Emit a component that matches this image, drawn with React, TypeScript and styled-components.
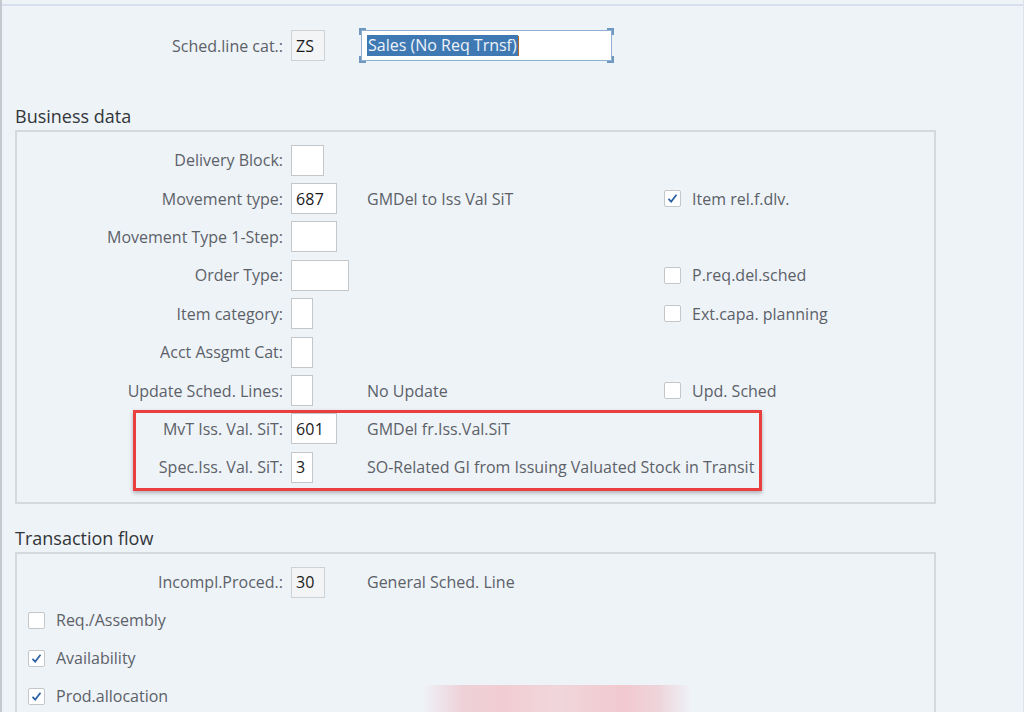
import React from "react";
import styled, { createGlobalStyle } from "styled-components";

const Global = createGlobalStyle`
  html, body { margin: 0; padding: 0; background: #eef3f8; }
  body { font-family: "Open Sans", "Liberation Sans", Arial, sans-serif; }
  * { box-sizing: border-box; }
`;

const FS = "16px";

const Screen = styled.div`
  position: relative;
  width: 1024px;
  height: 712px;
  overflow: hidden;
  background: #eef3f8;
  border-left: 2px solid #c4c9cf;
  border-right: 1px solid #dde3ea;
`;

const TopRule = styled.div`
  height: 2px;
  margin-top: 4px;
  background: #d6e0ec;
`;

const Content = styled.div`
  padding-left: 13px;
`;

const HeaderRow = styled.div`
  display: grid;
  grid-template-columns: 276px 70px 251px;
  align-items: center;
  height: 31px;
  margin-top: 24px;
`;

const Label = styled.div`
  font-size: ${FS};
  color: #5c6168;
  text-align: right;
  padding-right: 8px;
  white-space: nowrap;
`;

const Field = styled.div<{ $w: number; $ro?: boolean }>`
  width: ${(p) => p.$w}px;
  height: 31px;
  background: ${(p) => (p.$ro ? "#f3f4f5" : "#ffffff")};
  border: 1px solid ${(p) => (p.$ro ? "#cfd2d5" : "#c4c7ca")};
  font-size: ${FS};
  color: #1a1a1a;
  display: flex;
  align-items: center;
  padding-left: 4px;
  letter-spacing: 0.2px;
`;

const SelectedField = styled.div`
  position: relative;
  width: 251px;
  height: 31px;
  background: #ffffff;
  border: 1px solid #8fb0d0;
  display: flex;
  align-items: center;
  padding-left: 5px;
`;

const Corner = styled.span<{ $v: "top" | "bottom"; $h: "left" | "right" }>`
  position: absolute;
  width: 7px;
  height: 7px;
  ${(p) => p.$v}: -3px;
  ${(p) => p.$h}: -3px;
  border-${(p) => p.$v}: 2px solid #6f98c0;
  border-${(p) => p.$h}: 2px solid #6f98c0;
`;

const Highlight = styled.span`
  background: #3f79b3;
  color: #eef3f9;
  font-size: ${FS};
  line-height: 21px;
  padding: 0 1px;
`;

const Caret = styled.span`
  display: inline-block;
  width: 1px;
  height: 20px;
  background: #b06a2a;
`;

const SectionTitle = styled.div<{ $mt: number }>`
  margin-top: ${(p) => p.$mt}px;
  font-size: 18px;
  line-height: 20px;
  height: 20px;
  color: #32363a;
`;

const GroupBox = styled.div<{ $h?: number }>`
  position: relative;
  margin-top: 4px;
  width: 921px;
  ${(p) => (p.$h ? `height: ${p.$h}px;` : "")}
  border: 2px solid #d5d9de;
  padding-top: 9px;
`;

const FormGrid = styled.div<{ $rows: number; $rh: number }>`
  display: grid;
  grid-template-columns: 274px 76px 297px 1fr;
  grid-template-rows: repeat(${(p) => p.$rows}, ${(p) => p.$rh}px);
  align-items: center;
`;

const Desc = styled.div`
  font-size: ${FS};
  color: #5c6168;
  white-space: nowrap;
`;

const CheckRow = styled.label`
  display: flex;
  align-items: center;
  gap: 11px;
  font-size: ${FS};
  color: #5c6168;
  white-space: nowrap;
`;

const LeftCheckRow = styled(CheckRow)`
  grid-column: 1 / -1;
  padding-left: 11px;
`;

const Box = styled.span`
  width: 17px;
  height: 17px;
  background: #fff;
  border: 1px solid #c4c7ca;
  border-radius: 2px;
  display: flex;
  align-items: center;
  justify-content: center;
  flex: none;
`;

const Empty = styled.div``;

const RedFrame = styled.div`
  position: absolute;
  left: 116px;
  top: 278px;
  width: 629px;
  height: 81px;
  border: 3px solid #e9403f;
  box-shadow: 0 2px 4px rgba(0, 0, 0, 0.28);
  pointer-events: none;
`;

const Smudge = styled.div`
  position: absolute;
  left: 420px;
  top: 685px;
  width: 270px;
  height: 30px;
  background: linear-gradient(
    to right,
    rgba(238, 243, 248, 0) 0%,
    rgba(238, 200, 208, 0.8) 15%,
    #f1cdd3 30%,
    #f0d6db 50%,
    #f1c9cf 75%,
    rgba(238, 200, 208, 0.7) 88%,
    rgba(238, 243, 248, 0) 100%
  );
  pointer-events: none;
`;

const Tick = () => (
  <svg width="13" height="13" viewBox="0 0 13 13">
    <path d="M2.5 6.8 L5.2 9.6 L10.5 2.8" fill="none" stroke="#2a62a5" strokeWidth="1.7" />
  </svg>
);

const Check = ({ checked }: { checked?: boolean }) => <Box>{checked ? <Tick /> : null}</Box>;

type Row = {
  label: string;
  w: number;
  value?: string;
  desc?: string;
  check?: { text: string; checked?: boolean };
};

const rows: Row[] = [
  { label: "Delivery Block:", w: 33 },
  { label: "Movement type:", w: 46, value: "687", desc: "GMDel to Iss Val SiT", check: { text: "Item rel.f.dlv.", checked: true } },
  { label: "Movement Type 1-Step:", w: 46 },
  { label: "Order Type:", w: 58, check: { text: "P.req.del.sched" } },
  { label: "Item category:", w: 22, check: { text: "Ext.capa. planning" } },
  { label: "Acct Assgmt Cat:", w: 22 },
  { label: "Update Sched. Lines:", w: 22, desc: "No Update", check: { text: "Upd. Sched" } },
  { label: "MvT Iss. Val. SiT:", w: 46, value: "601", desc: "GMDel fr.Iss.Val.SiT" },
  { label: "Spec.Iss. Val. SiT:", w: 22, value: "3", desc: "SO-Related GI from Issuing Valuated Stock in Transit" },
];

export default function App() {
  return (
    <Screen>
      <Global />
      <TopRule />
      <Content>
        <HeaderRow>
          <Label>Sched.line cat.:</Label>
          <Field $w={34} $ro>ZS</Field>
          <SelectedField>
            <Corner $v="top" $h="left" />
            <Corner $v="top" $h="right" />
            <Corner $v="bottom" $h="left" />
            <Corner $v="bottom" $h="right" />
            <Highlight>Sales (No Req Trnsf)</Highlight>
            <Caret />
          </SelectedField>
        </HeaderRow>

        <SectionTitle $mt={45}>Business data</SectionTitle>
        <GroupBox $h={374}>
          <FormGrid $rows={9} $rh={38.4}>
            {rows.map((r) => (
              <React.Fragment key={r.label}>
                <Label>{r.label}</Label>
                <Field $w={r.w}>{r.value ?? ""}</Field>
                {r.desc ? <Desc>{r.desc}</Desc> : <Empty />}
                {r.check ? (
                  <CheckRow>
                    <Check checked={r.check.checked} />
                    {r.check.text}
                  </CheckRow>
                ) : (
                  <Empty />
                )}
              </React.Fragment>
            ))}
          </FormGrid>
          <RedFrame />
        </GroupBox>

        <SectionTitle $mt={24}>Transaction flow</SectionTitle>
        <GroupBox $h={200}>
          <FormGrid $rows={4} $rh={38}>
            <Label>Incompl.Proced.:</Label>
            <Field $w={34} $ro>30</Field>
            <Desc>General Sched. Line</Desc>
            <Empty />
            <LeftCheckRow>
              <Check />
              Req./Assembly
            </LeftCheckRow>
            <LeftCheckRow>
              <Check checked />
              Availability
            </LeftCheckRow>
            <LeftCheckRow>
              <Check checked />
              Prod.allocation
            </LeftCheckRow>
          </FormGrid>
        </GroupBox>
      </Content>
      <Smudge />
    </Screen>
  );
}
